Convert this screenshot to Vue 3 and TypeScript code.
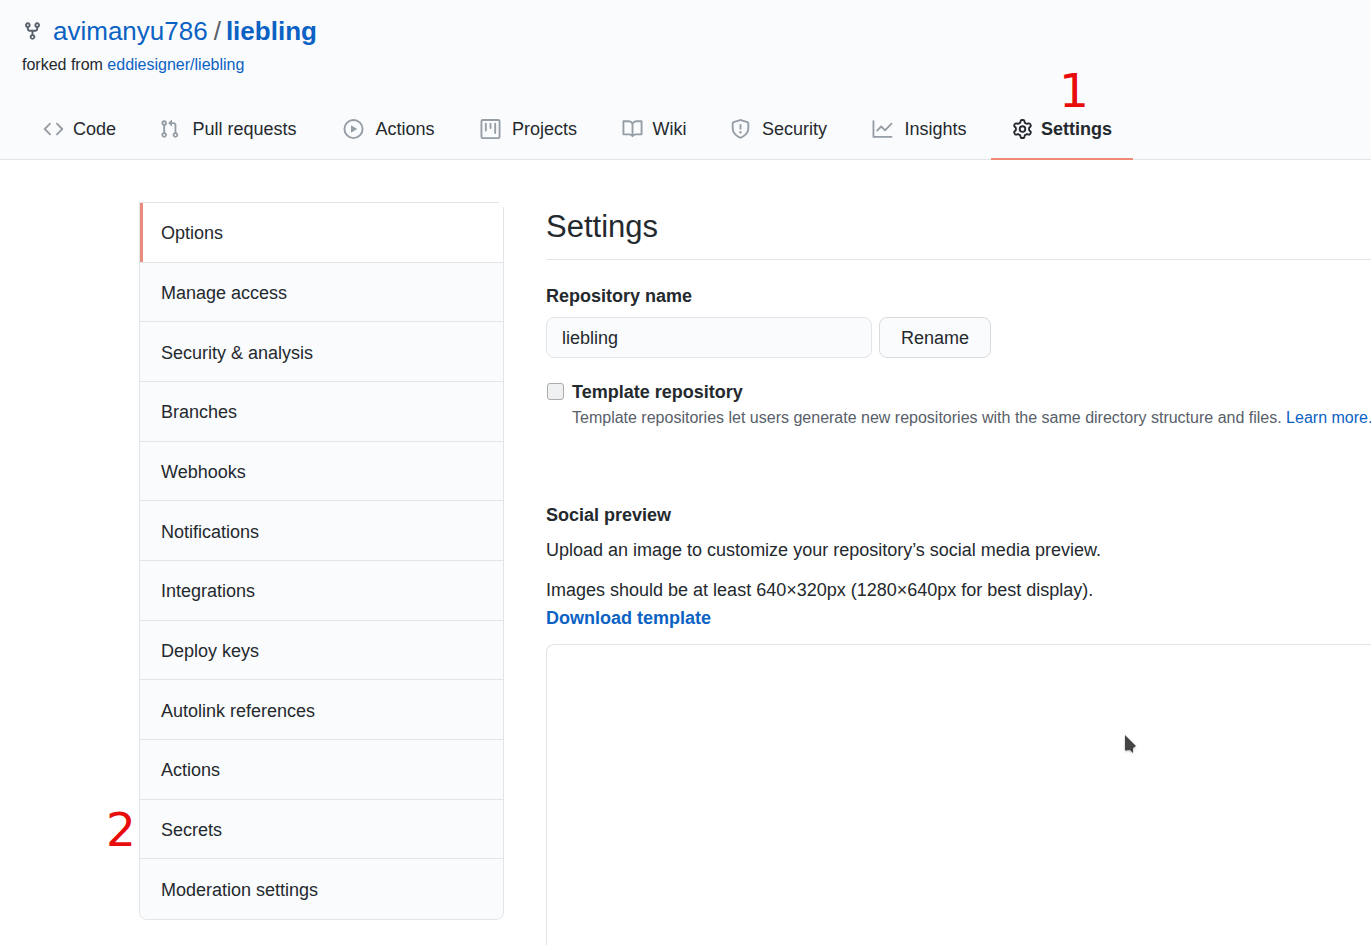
<script setup lang="ts">
import { ref } from 'vue'

interface Tab {
  label: string
  icon: string
  badge?: string
}

const tabs: Tab[] = [
  { label: 'Code', icon: 'M4.72 3.22a.75.75 0 011.06 1.06L2.06 8l3.72 3.72a.75.75 0 11-1.06 1.06L.47 8.53a.75.75 0 010-1.06l4.25-4.25zm6.56 0a.75.75 0 10-1.06 1.06L13.94 8l-3.72 3.72a.75.75 0 101.06 1.06l4.25-4.25a.75.75 0 000-1.06l-4.25-4.25z' },
  { label: 'Pull requests', icon: 'M7.177 3.073L9.573.677A.25.25 0 0110 .854v4.792a.25.25 0 01-.427.177L7.177 3.427a.25.25 0 010-.354zM3.75 2.5a.75.75 0 100 1.5.75.75 0 000-1.5zm-2.25.75a2.25 2.25 0 113 2.122v5.256a2.251 2.251 0 11-1.5 0V5.372A2.25 2.25 0 011.5 3.25zM11 2.5h-1V4h1a1 1 0 011 1v5.628a2.251 2.251 0 101.5 0V5A2.5 2.5 0 0011 2.5zm1 10.25a.75.75 0 111.5 0 .75.75 0 01-1.5 0zM3.75 12a.75.75 0 100 1.5.75.75 0 000-1.5z' },
  { label: 'Actions', icon: 'M1.5 8a6.5 6.5 0 1113 0 6.5 6.5 0 01-13 0zM8 0a8 8 0 100 16A8 8 0 008 0zM6.379 5.227A.25.25 0 006 5.442v5.117a.25.25 0 00.379.214l4.264-2.559a.25.25 0 000-.428L6.379 5.227z' },
  { label: 'Projects', icon: 'M1.75 0A1.75 1.75 0 000 1.75v12.5C0 15.216.784 16 1.75 16h12.5A1.75 1.75 0 0016 14.25V1.75A1.75 1.75 0 0014.25 0H1.75zM1.5 1.75a.25.25 0 01.25-.25h12.5a.25.25 0 01.25.25v12.5a.25.25 0 01-.25.25H1.75a.25.25 0 01-.25-.25V1.75zM11.75 3a.75.75 0 00-.75.75v7.5a.75.75 0 001.5 0v-7.5a.75.75 0 00-.75-.75zm-8.25.75a.75.75 0 011.5 0v5.5a.75.75 0 01-1.5 0v-5.5zM8 3a.75.75 0 00-.75.75v3.5a.75.75 0 001.5 0v-3.5A.75.75 0 008 3z' },
  { label: 'Wiki', icon: 'M0 1.75A.75.75 0 01.75 1h4.253c1.227 0 2.317.59 3 1.501A3.744 3.744 0 0111.006 1h4.245a.75.75 0 01.75.75v10.5a.75.75 0 01-.75.75h-4.507a2.25 2.25 0 00-1.591.659l-.622.621a.75.75 0 01-1.06 0l-.622-.621A2.25 2.25 0 005.258 13H.75a.75.75 0 01-.75-.75V1.75zm8.755 3a2.25 2.25 0 012.25-2.25H14.5v9h-3.757c-.71 0-1.4.201-1.992.572l.004-7.322zm-1.504 7.324l.004-5.073-.002-2.253A2.25 2.25 0 005.003 2.5H1.5v9h3.757a3.75 3.75 0 011.994.574z' },
  { label: 'Security', icon: 'M7.467.133a1.75 1.75 0 011.066 0l5.25 1.68A1.75 1.75 0 0115 3.48V7c0 1.566-.32 3.182-1.303 4.682-.983 1.498-2.585 2.813-5.032 3.855a1.7 1.7 0 01-1.33 0c-2.447-1.042-4.049-2.357-5.032-3.855C1.32 10.182 1 8.566 1 7V3.48a1.75 1.75 0 011.217-1.667l5.25-1.68zm.61 1.429a.25.25 0 00-.153 0l-5.25 1.68a.25.25 0 00-.174.238V7c0 1.358.275 2.666 1.057 3.86.784 1.194 2.121 2.34 4.366 3.297a.2.2 0 00.154 0c2.245-.956 3.582-2.104 4.366-3.298C13.225 9.666 13.5 8.36 13.5 7V3.48a.25.25 0 00-.174-.237l-5.25-1.68zM9 10.5a1 1 0 11-2 0 1 1 0 012 0zm-.25-5.75a.75.75 0 10-1.5 0v3a.75.75 0 001.5 0v-3z' },
  { label: 'Insights', icon: 'M1.5 1.75a.75.75 0 00-1.5 0v12.5c0 .414.336.75.75.75h14.5a.75.75 0 000-1.5H1.5V1.75zm14.28 2.53a.75.75 0 00-1.06-1.06L10 7.94 7.53 5.47a.75.75 0 00-1.06 0L3.22 8.72a.75.75 0 001.06 1.06L7 7.06l2.47 2.47a.75.75 0 001.06 0l5.25-5.25z' },
  { label: 'Settings', badge: '1', icon: 'M7.429 1.525a6.593 6.593 0 011.142 0c.036.003.108.036.137.146l.289 1.105c.147.56.55.967.997 1.189.174.086.341.183.501.29.417.278.97.423 1.53.27l1.102-.303c.11-.03.175.016.195.046.219.31.41.641.573.989.014.031.022.11-.059.19l-.815.806c-.411.406-.562.957-.53 1.456a4.588 4.588 0 010 .582c-.032.499.119 1.05.53 1.456l.815.806c.08.08.073.159.059.19a6.494 6.494 0 01-.573.99c-.02.029-.086.074-.195.045l-1.103-.303c-.559-.153-1.112-.008-1.529.27-.16.107-.327.204-.5.29-.449.222-.851.628-.998 1.189l-.289 1.105c-.029.11-.101.143-.137.146a6.613 6.613 0 01-1.142 0c-.036-.003-.108-.037-.137-.146l-.289-1.105c-.147-.56-.55-.967-.997-1.189a4.502 4.502 0 01-.501-.29c-.417-.278-.97-.423-1.53-.27l-1.102.303c-.11.03-.175-.016-.195-.046a6.492 6.492 0 01-.573-.989c-.014-.031-.022-.11.059-.19l.815-.806c.411-.406.562-.957.53-1.456a4.587 4.587 0 010-.582c.032-.499-.119-1.05-.53-1.456l-.815-.806c-.08-.08-.073-.159-.059-.19a6.44 6.44 0 01.573-.99c.02-.029.086-.075.195-.045l1.103.303c.559.153 1.112.008 1.529-.27.16-.107.327-.204.5-.29.449-.222.851-.628.998-1.189l.289-1.105c.029-.11.101-.143.137-.146zM8 0c-.236 0-.47.01-.701.03-.743.065-1.29.615-1.458 1.261l-.29 1.106c-.017.066-.078.158-.211.224a5.994 5.994 0 00-.668.386c-.123.082-.233.09-.3.071L3.27 2.776c-.644-.177-1.392.02-1.82.63a7.977 7.977 0 00-.704 1.217c-.315.675-.111 1.422.363 1.891l.815.806c.05.048.098.147.088.294a6.084 6.084 0 000 .772c.01.147-.038.246-.088.294l-.815.806c-.474.469-.678 1.216-.363 1.891.2.428.436.835.704 1.218.428.609 1.176.806 1.82.63l1.103-.303c.066-.019.176-.011.299.071.213.143.436.272.668.386.133.066.194.158.212.224l.289 1.106c.169.646.715 1.196 1.458 1.26a8.094 8.094 0 001.402 0c.743-.064 1.29-.614 1.458-1.26l.29-1.106c.017-.066.078-.158.211-.224a5.98 5.98 0 00.668-.386c.123-.082.233-.09.3-.071l1.102.302c.644.177 1.392-.02 1.82-.63.268-.382.505-.789.704-1.217.315-.675.111-1.422-.364-1.891l-.814-.806c-.05-.048-.098-.147-.088-.294a6.1 6.1 0 000-.772c-.01-.147.039-.246.088-.294l.814-.806c.475-.469.679-1.216.364-1.891a7.992 7.992 0 00-.704-1.218c-.428-.609-1.176-.806-1.82-.63l-1.103.303c-.066.019-.176.011-.299-.071a5.991 5.991 0 00-.668-.386c-.133-.066-.194-.158-.212-.224L10.16 1.29C9.99.645 9.444.095 8.701.031A8.094 8.094 0 008 0zm1.5 8a1.5 1.5 0 11-3 0 1.5 1.5 0 013 0zM11 8a3 3 0 11-6 0 3 3 0 016 0z' },
]

const menu = [
  'Options',
  'Manage access',
  'Security & analysis',
  'Branches',
  'Webhooks',
  'Notifications',
  'Integrations',
  'Deploy keys',
  'Autolink references',
  'Actions',
  'Secrets',
  'Moderation settings',
]

const repoName = ref('liebling')
const isTemplate = ref(false)
</script>

<template>
  <div class="page">
    <header class="head">
      <h1 class="title">
        <svg class="icon fork" viewBox="0 0 16 16" aria-hidden="true">
          <path fill-rule="evenodd" d="M5 3.25a.75.75 0 11-1.5 0 .75.75 0 011.5 0zm0 2.122a2.25 2.25 0 10-1.5 0v.878A2.25 2.25 0 005.75 8.5h1.5v2.128a2.251 2.251 0 101.5 0V8.5h1.5a2.25 2.25 0 002.25-2.25v-.878a2.25 2.25 0 10-1.5 0v.878a.75.75 0 01-.75.75h-4.5A.75.75 0 015 6.25v-.878zm3.75 7.378a.75.75 0 11-1.5 0 .75.75 0 011.5 0zm3-8.75a.75.75 0 100-1.5.75.75 0 000 1.5z" />
        </svg>
        <a href="#">avimanyu786</a>
        <span class="slash">/</span>
        <a href="#" class="strong">liebling</a>
      </h1>
      <p class="forked">forked from <a href="#">eddiesigner/liebling</a></p>
      <nav class="tabs" aria-label="Repository">
        <a
          v-for="tab in tabs"
          :key="tab.label"
          href="#"
          class="tab"
          :class="{ active: tab.label === 'Settings' }"
        >
          <svg class="icon" viewBox="0 0 16 16" aria-hidden="true">
            <path fill-rule="evenodd" :d="tab.icon" />
          </svg>
          <span class="tab-label" :data-content="tab.label">{{ tab.label }}</span>
          <span v-if="tab.badge" class="step step-tab">{{ tab.badge }}</span>
        </a>
      </nav>
    </header>

    <div class="body">
      <nav class="menu" aria-label="Settings sections">
        <a
          v-for="item in menu"
          :key="item"
          href="#"
          class="menu-item"
          :class="{ selected: item === 'Options' }"
        >
          {{ item }}
          <span v-if="item === 'Secrets'" class="step step-menu">2</span>
        </a>
      </nav>

      <main class="content">
        <h2 class="heading">Settings</h2>

        <form class="rename" @submit.prevent>
          <label for="repo-name" class="label">Repository name</label>
          <div class="rename-row">
            <input id="repo-name" v-model="repoName" class="field" type="text" />
            <button type="submit" class="button">Rename</button>
          </div>
        </form>

        <div class="template">
          <input id="template" v-model="isTemplate" type="checkbox" class="check" />
          <div>
            <label for="template" class="label">Template repository</label>
            <p class="note">
              Template repositories let users generate new repositories with the same directory structure and files.
              <a href="#">Learn more.</a>
            </p>
          </div>
        </div>

        <section class="social">
          <h3 class="label">Social preview</h3>
          <p class="para">Upload an image to customize your repository’s social media preview.</p>
          <p class="para">
            Images should be at least 640×320px (1280×640px for best display).<br />
            <a href="#" class="strong">Download template</a>
          </p>
          <div class="preview">
            <svg class="cursor" viewBox="0 0 12 19" aria-hidden="true">
              <path d="M0 0L11 11L8 13V18L5 15L0 15.500Z" />
            </svg>
          </div>
        </section>
      </main>
    </div>
  </div>
</template>

<style>
body {
  margin: 0;
  background: #fff;
}
</style>

<style scoped>
.page {
  display: flex;
  flex-direction: column;
  min-height: 100vh;
  overflow: hidden;
  color: #24292e;
  font-family: "Liberation Sans", Arial, sans-serif;
  font-size: 18px;
  line-height: 28px;
}

a {
  color: #0b62c4;
  text-decoration: none;
}

h1,
h2,
h3,
p {
  margin: 0;
  font-weight: 400;
}

.strong {
  font-weight: 700;
}

.icon {
  flex: none;
  width: 21px;
  height: 21px;
  fill: #959da5;
}

.head {
  padding: 12px 22px 0;
  background: #fafbfc;
  border-bottom: 1px solid #e1e4e8;
}

.title {
  display: flex;
  align-items: center;
  font-size: 26px;
  line-height: 38px;
}

.fork {
  height: 20px;
  margin-right: 10px;
  overflow: visible;
  fill: #586069;
}

.slash {
  margin: 0 5px 0 6px;
  color: #586069;
}

.forked {
  font-size: 16px;
  line-height: 30px;
}

.tabs {
  display: flex;
  margin: 18px 0 -1px;
}

.tab {
  position: relative;
  display: flex;
  align-items: center;
  gap: 8px;
  padding: 21px 21px 19px;
  border-bottom: 2px solid transparent;
  color: #24292e;
  line-height: 20px;
  white-space: nowrap;
}

.tab .icon {
  overflow: visible;
}

.tab-label {
  text-align: center;
}

.tab-label::before {
  display: block;
  height: 0;
  overflow: hidden;
  visibility: hidden;
  font-weight: 700;
  content: attr(data-content);
}

.tab .icon {
  height: 20px;
}

.tab.active {
  border-bottom-color: #ee8a77;
  font-weight: 700;
}

.tab.active .icon {
  fill: #24292e;
}

.step {
  position: absolute;
  color: #e80c0c;
  font-family: "DejaVu Sans", sans-serif;
  font-size: 47px;
  font-weight: 400;
  line-height: 48px;
}

.step-tab {
  top: -31px;
  left: 68px;
}

.step-menu {
  top: 6px;
  left: -34px;
}

.body {
  display: grid;
  flex: 1;
  grid-template-columns: 365px minmax(0, 1fr);
  gap: 42px;
  padding: 42px 0 0 139px;
}

.menu {
  display: grid;
  grid-auto-rows: 1fr;
  align-self: start;
  box-sizing: border-box;
  min-height: 718px;
  border: 1px solid #e1e4e8;
  border-radius: 0 0 8px 8px;
}

.menu-item {
  position: relative;
  display: flex;
  align-items: center;
  padding: 15px 21px 13px;
  background: #fafbfc;
  border-bottom: 1px solid #e1e4e8;
  color: #24292e;
}

.menu-item:last-child {
  border-bottom: 0;
  border-radius: 0 0 8px 8px;
}

.selected {
  background: #fff;
}

.selected::before {
  position: absolute;
  inset: 0 auto 0 0;
  width: 3px;
  background: #e88c7d;
  content: "";
}

.selected::after {
  position: absolute;
  top: -1px;
  right: -1px;
  width: 5px;
  height: 5px;
  background: #fff;
  content: "";
}

.content {
  display: flex;
  flex-direction: column;
}

.heading {
  padding-bottom: 7px;
  border-bottom: 1px solid #e1e4e8;
  font-size: 31px;
  line-height: 50px;
}

.label {
  font-weight: 700;
}

.rename {
  margin-top: 22px;
}

.rename .label {
  display: block;
}

.rename-row {
  display: flex;
  gap: 7px;
  margin-top: 7px;
}

.field,
.button {
  box-sizing: border-box;
  height: 41px;
  border: 1px solid #e1e4e8;
  border-radius: 8px;
  background: #fafbfc;
  color: #24292e;
  font: inherit;
}

.field {
  width: 326px;
  padding: 1px 15px 0;
}

.button {
  padding: 0 21px;
  border-color: #d9dcdf;
}

.template {
  display: flex;
  gap: 8px;
  margin-top: 20px;
}

.check {
  flex: none;
  appearance: none;
  width: 17px;
  height: 17px;
  margin: 5px 0 0 1px;
  border: 1px solid #a9abad;
  border-radius: 3px;
  background: #eff0f2;
}

.note {
  color: #586069;
  font-size: 16px;
  line-height: 24px;
  white-space: nowrap;
}

.social {
  display: flex;
  flex: 1;
  flex-direction: column;
  margin-top: 71px;
}

.social .label {
  font-size: 18px;
  margin-bottom: 7px;
}

.para {
  margin-bottom: 12px;
}

.preview {
  position: relative;
  flex: 1;
  border: 1px solid #e1e4e8;
  border-width: 1px 0 0 1px;
  border-radius: 8px 0 0;
}

.cursor {
  position: absolute;
  top: 90px;
  left: 578px;
  width: 12px;
  height: 19px;
  fill: #444;
  filter: drop-shadow(0 1px 1px #bbb);
}
</style>
